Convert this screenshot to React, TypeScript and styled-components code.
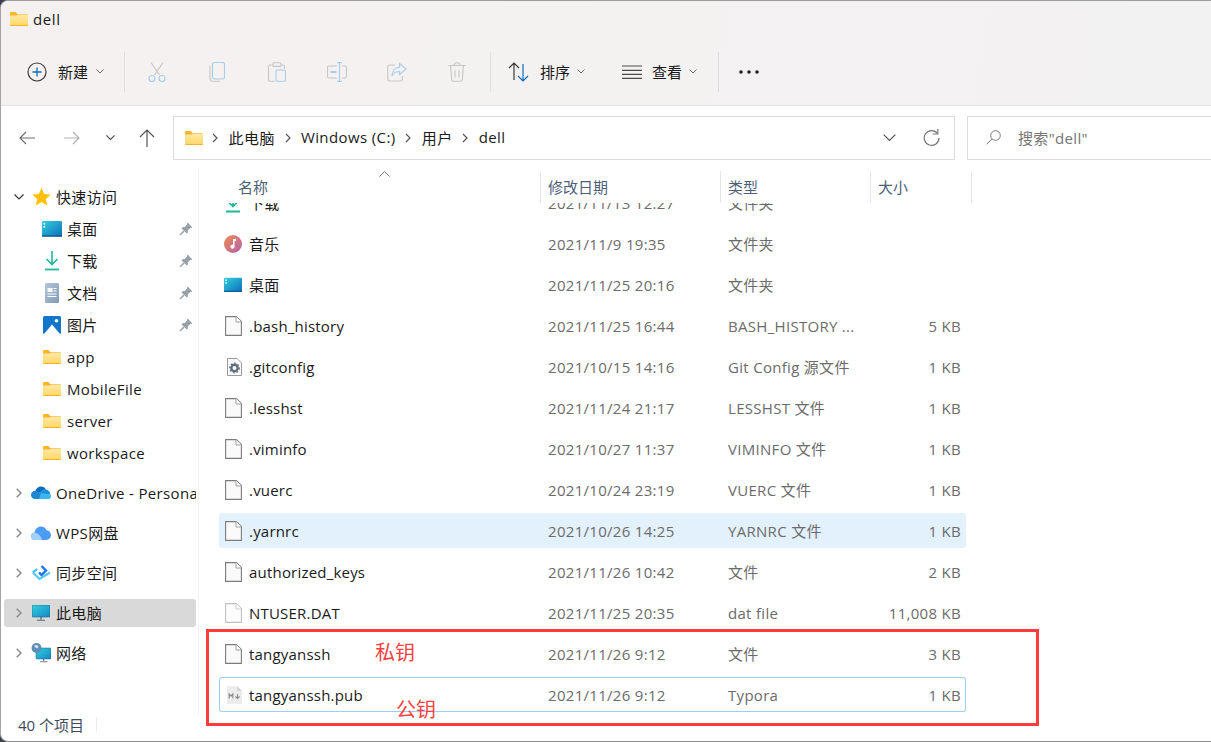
import React from 'react';
import styled, { createGlobalStyle } from 'styled-components';

const GlobalStyle = createGlobalStyle`
  html, body { margin: 0; padding: 0; background: #3a3f4a; }
  body { font-family: "Open Sans", "Noto Sans CJK SC", sans-serif; }
  * { box-sizing: border-box; }
`;

const UI_FONT = '"Open Sans", "Noto Sans CJK SC", sans-serif';

const Window = styled.div`
  position: relative;
  width: 1211px;
  height: 742px;
  display: flex;
  flex-direction: column;
  overflow: hidden;
  background: #fff;
  border-top: 1px solid #9c9c9c;
  border-left: 1px solid #a4a4a4;
  border-bottom: 1px solid #8e8e8e;
  border-radius: 8px 0 0 8px;
  font-family: ${UI_FONT};
  font-size: 15px;
  color: #1a1a1a;
`;

const Chrome = styled.div`
  background: linear-gradient(100deg, #f4f1f0 0%, #f4f1f1 40%, #f3f2f2 100%);
  border-bottom: 1px solid #e2e2e2;
`;

const TitleBar = styled.div`
  height: 45px;
  display: flex;
  align-items: center;
  gap: 5px;
  padding: 0 0 10px 9px;
  font-size: 15px;
  letter-spacing: 0.6px;
`;

const Toolbar = styled.div`
  height: 59px;
  display: flex;
  align-items: center;
  padding: 0 0 8px 26px;
`;

const TextButton = styled.div<{ $width: number; $pad?: number; $gap?: number }>`
  width: ${({ $width }) => $width}px;
  display: flex;
  align-items: center;
  gap: ${({ $gap }) => $gap ?? 10}px;
  padding-left: ${({ $pad }) => $pad ?? 0}px;
  font-size: 15px;
  svg { flex: 0 0 auto; }
`;

const IconButton = styled.div`
  width: 60px;
  display: flex;
  justify-content: center;
`;

const ToolDivider = styled.div<{ $offset?: number }>`
  width: 1px;
  height: 40px;
  margin: 0 2px 0 ${({ $offset }) => $offset ?? 0}px;
  background: #e0dfdf;
`;

const SmallCaret = styled.svg`
  width: 8px;
  height: 5px;
  margin-left: -3px;
  fill: none;
  stroke: #666;
  stroke-width: 1;
`;

const NavRow = styled.div`
  height: 64px;
  display: flex;
  align-items: flex-start;
  padding-top: 10px;
`;

const NavButtons = styled.div`
  width: 172px;
  height: 43px;
  display: flex;
  align-items: center;
`;

const NavButton = styled.div<{ $width: number }>`
  width: ${({ $width }) => $width}px;
  display: flex;
  justify-content: center;
`;

const AddressBox = styled.div`
  width: 782px;
  height: 44px;
  display: flex;
  align-items: center;
  gap: 7px;
  padding: 0 12px 0 10.5px;
  border: 1.5px solid #dcdcdc;
  background: #fff;
`;

const Crumb = styled.span`
  padding-bottom: 2px;
  font-size: 15px;
  letter-spacing: 0.4px;
  white-space: nowrap;
`;

const CrumbSep = styled.svg`
  width: 6px;
  height: 10px;
  margin: 0 3.3px 0 2.8px;
  fill: none;
  stroke: #555;
  stroke-width: 1.2;
`;

const AddressTools = styled.div`
  margin-left: auto;
  display: flex;
  align-items: center;
  gap: 27px;
  padding-right: 2px;
`;

const SearchBox = styled.div`
  flex: 1;
  height: 44px;
  margin-left: 12px;
  margin-right: -4px;
  display: flex;
  align-items: center;
  gap: 17px;
  padding: 0 0 2px 18px;
  border: 1.5px solid #dcdcdc;
  font-size: 15px;
  letter-spacing: 0.35px;
  color: #757575;
`;

const Body = styled.div`
  flex: 1;
  min-height: 0;
  display: flex;
`;

const Sidebar = styled.nav`
  width: 198px;
  flex: 0 0 auto;
  padding: 13px 2px 0 3px;
  border-right: 1px solid #f2f2f2;
  overflow: hidden;
`;

const TreeGroup = styled.div<{ $gap: number }>`
  display: flex;
  flex-direction: column;
  gap: ${({ $gap }) => $gap}px;
  margin-bottom: 12px;
`;

const TreeRow = styled.div<{ $selected?: boolean; $child?: boolean }>`
  height: 28px;
  display: flex;
  align-items: center;
  padding: 0 0 1px ${({ $child }) => ($child ? 38 : 9)}px;
  border-radius: 3px;
  background: ${({ $selected }) => ($selected ? '#d9d9d9' : 'transparent')};
  letter-spacing: 0.35px;
  white-space: nowrap;
  overflow: hidden;
`;

const TreeLabel = styled.span`
  flex: 0 0 auto;
`;

const Twisty = styled.span`
  width: 12px;
  height: 12px;
  flex: 0 0 auto;
  margin-right: 6px;
  display: flex;
  align-items: center;
  justify-content: center;
`;

const TreeIcon = styled.span`
  width: 20px;
  height: 20px;
  flex: 0 0 auto;
  margin-right: 5px;
  display: flex;
  align-items: center;
  justify-content: center;
`;

const Pin = styled.span`
  margin-left: auto;
  margin-right: 3px;
  display: flex;
`;

const FilePane = styled.main`
  flex: 1;
  min-width: 0;
  display: flex;
  flex-direction: column;
  padding-top: 1px;
`;

const HeaderRow = styled.div`
  position: relative;
  height: 32px;
  flex: 0 0 auto;
  display: grid;
  grid-template-columns: 342px 180px 150px 101px;
  background: #fff;
`;

const HeaderCell = styled.div<{ $first?: boolean }>`
  padding: 5px 0 0 ${({ $first }) => ($first ? 39 : 7)}px;
  border-right: 1px solid #e6e6e6;
  font-size: 15px;
  color: #4c5f78;
`;

const SortCaret = styled.svg`
  position: absolute;
  left: 180px;
  top: 0;
  width: 11px;
  height: 6px;
  fill: none;
  stroke: #777;
  stroke-width: 1;
`;

const ListViewport = styled.div`
  flex: 1;
  min-height: 0;
  overflow: hidden;
`;

const FileList = styled.div`
  margin: -18px 0 0 20px;
  width: 747px;
  display: flex;
  flex-direction: column;
  gap: 6px;
`;

const FileRow = styled.div<{ $state?: 'selected' | 'focused' }>`
  height: 35px;
  display: grid;
  grid-template-columns: 322px 180px 150px 95px;
  align-items: center;
  border-radius: 3px;
  background: ${({ $state }) => ($state === 'selected' ? '#e3f1fc' : 'transparent')};
  box-shadow: ${({ $state }) => ($state === 'focused' ? 'inset 0 0 0 1px #9fcdf3' : 'none')};
`;

const NameCell = styled.div`
  display: flex;
  align-items: center;
  gap: 7px;
  padding-left: 5px;
  white-space: nowrap;
  font-size: 15px;
  letter-spacing: 0.2px;
`;

const FileIconSlot = styled.span`
  width: 18px;
  height: 20px;
  display: flex;
  align-items: center;
  justify-content: center;
`;

const DetailCell = styled.div<{ $right?: boolean }>`
  padding: ${({ $right }) => ($right ? '0 5px 0 0' : '0 0 0 7px')};
  text-align: ${({ $right }) => ($right ? 'right' : 'left')};
  font-size: 15px;
  letter-spacing: 0.3px;
  color: #6b6b6b;
  white-space: nowrap;
  overflow: hidden;
`;

const StatusBar = styled.div`
  height: 25px;
  flex: 0 0 auto;
  display: flex;
  align-items: center;
  padding: 0 0 8px 17px;
  font-size: 15px;
  color: #3d4a5c;
`;

const StatusDivider = styled.div`
  width: 1px;
  height: 15px;
  margin-left: 12px;
  background: #ececec;
`;

const RedBox = styled.div`
  position: absolute;
  left: 205px;
  top: 628px;
  width: 833px;
  height: 97px;
  border: 3px solid #ff3b3b;
  pointer-events: none;
`;

const Annotation = styled.span<{ $x: number; $y: number }>`
  position: absolute;
  left: ${({ $x }) => $x}px;
  top: ${({ $y }) => $y}px;
  font-size: 20px;
  line-height: 26px;
  color: #f5413f;
  font-family: "Noto Sans CJK SC", sans-serif;
`;

const Gradients = () => (
  <svg width="0" height="0" style={{ position: 'absolute' }} aria-hidden="true">
    <defs>
      <linearGradient id="folderBody" x1="0" y1="0" x2="0" y2="1">
        <stop offset="0" stopColor="#ffe9a6" />
        <stop offset="1" stopColor="#ffd766" />
      </linearGradient>
      <linearGradient id="desktopFill" x1="0" y1="0" x2="1" y2="1">
        <stop offset="0" stopColor="#35cfe0" />
        <stop offset="1" stopColor="#0c6fb8" />
      </linearGradient>
      <linearGradient id="musicFill" x1="0" y1="0" x2="1" y2="1">
        <stop offset="0" stopColor="#f08a4b" />
        <stop offset="1" stopColor="#b263b0" />
      </linearGradient>
      <linearGradient id="docFill" x1="0" y1="0" x2="1" y2="1">
        <stop offset="0" stopColor="#b6c7da" />
        <stop offset="1" stopColor="#7f9ab8" />
      </linearGradient>
      <linearGradient id="pcFill" x1="0" y1="0" x2="1" y2="1">
        <stop offset="0" stopColor="#32d0de" />
        <stop offset="1" stopColor="#1488c4" />
      </linearGradient>
    </defs>
  </svg>
);

const FolderIcon = () => (
  <svg width="18" height="14" viewBox="0 0 18 14">
    <path d="M0 1.2C0 .5.5 0 1.2 0h4.2l2 2H17c.6 0 1 .4 1 1v2H0z" fill="#f7b52c" />
    <path d="M0 3.6h6.6L8 2.6H18V13c0 .6-.4 1-1 1H1c-.6 0-1-.4-1-1z" fill="url(#folderBody)" />
    <path d="M0 13h18v.2c0 .5-.4.8-.9.8H.9c-.5 0-.9-.3-.9-.8z" fill="#f4b42e" />
  </svg>
);

const DesktopIcon = () => (
  <svg width="20" height="16" viewBox="0 0 20 16">
    <rect width="20" height="15.5" rx="1.2" fill="url(#desktopFill)" />
    <rect x="1.5" y="2" width="1.6" height="1.6" fill="#fff" />
    <rect x="1.5" y="5" width="1.6" height="1.6" fill="#fff" />
    <rect y="14.4" width="20" height="1.2" fill="#0a4f8c" />
  </svg>
);

const DownloadIcon = () => (
  <svg width="16" height="20" viewBox="0 0 16 20" fill="none" stroke="#1fb89a" strokeWidth="1.6">
    <path d="M8 0v13M2.5 8 8 13.5 13.5 8" />
    <path d="M1 18.5h14" strokeWidth="1.8" />
  </svg>
);

const DocumentIcon = () => (
  <svg width="16" height="20" viewBox="0 0 16 20">
    <rect x="1" width="14" height="20" rx="1.5" fill="url(#docFill)" />
    <path d="M3.5 5h5v4h-5zM9.5 5h3v1h-3zM9.5 7.5h3v1h-3zM3.5 10.5h9v1h-9zM3.5 13h9v1h-9z" fill="#fff" />
  </svg>
);

const PicturesIcon = () => (
  <svg width="18" height="18" viewBox="0 0 18 18">
    <rect width="18" height="18" rx="1.5" fill="#1176c9" />
    <circle cx="13.5" cy="4.8" r="1.8" fill="#fff" />
    <path d="M1 18 9 8.5 17 18z" fill="#fff" />
  </svg>
);

const PinIcon = () => (
  <svg width="14" height="14" viewBox="0 0 14 14" fill="#98a0a8">
    <path d="M8.6.6 13.4 5.4 12.4 6 11.5 5.8 8.9 8.4 8.8 10.6 7.8 11.6 2.4 6.2 3.4 5.2 5.6 5.1 8.2 2.5 8 1.6z" />
    <path d="M4.3 8.6 5.4 9.7 1.2 13.6.4 12.8z" />
  </svg>
);

const StarIcon = () => (
  <svg width="19" height="18" viewBox="0 0 19 18">
    <path d="M9.5 0l2.7 6 6.5.7-4.9 4.3 1.4 6.4-5.7-3.3-5.7 3.3L5.2 11 .3 6.7 6.8 6z" fill="#ffc000" />
  </svg>
);

const OneDriveIcon = () => (
  <svg width="20" height="13" viewBox="0 0 20 13">
    <path d="M4 6.5C4.4 3 7 .5 10 .5c2.2 0 4 1.2 5 3-2.6 0-4.2 1-5.2 3L4 8z" fill="#0f6cbd" />
    <path d="M9 7c1-2.4 3-3.5 5.5-3.5 2.7 0 4.5 2 5 5L9 9z" fill="#1b8fdc" />
    <path d="M4.3 4.8C2 4.8 0 6.5 0 9c0 2.3 1.8 4 4 4h6V8L7 6z" fill="#1f86d6" />
    <path d="M8 13h9.5c1.5 0 2.5-1.2 2.5-2.6 0-.7-.2-1.3-.5-1.9L10 7z" fill="#3cb6f2" />
  </svg>
);

const WpsIcon = () => (
  <svg width="20" height="14" viewBox="0 0 20 14">
    <path d="M4 14C1.8 14 0 12.4 0 10.2 0 8 1.7 6.5 3.6 6.4 4 3 6.8.5 10 .5c2.5 0 4.7 1.5 5.6 3.7 2.5.2 4.4 2.4 4.4 4.9 0 2.7-2.1 4.9-4.7 4.9z" fill="#4b9cf5" />
    <path d="M3 14c-1.8-.5-3-2-3-3.8C0 8 1.7 6.5 3.6 6.4 7 7 10 10 11 14z" fill="#a5cffb" />
  </svg>
);

const SyncIcon = () => (
  <svg width="19" height="15" viewBox="0 0 19 15" fill="none">
    <path d="M9.5 1 14 5.5 9.5 10 7 7.5" stroke="#1877f2" strokeWidth="2.4" />
    <path d="M1 7.5 5 4" stroke="#33c3f0" strokeWidth="2.2" />
    <path d="M1 7.5 7.5 14 18 7.5" stroke="#55c8f5" strokeWidth="2.2" />
  </svg>
);

const ComputerIcon = () => (
  <svg width="18" height="16" viewBox="0 0 18 16">
    <rect width="18" height="12" rx=".8" fill="url(#pcFill)" stroke="#245f80" strokeWidth=".6" />
    <path d="M8.3 12h1.4v2.5H8.3zM5 14.8h8v1H5z" fill="#5a6b7a" />
  </svg>
);

const NetworkIcon = () => (
  <svg width="20" height="20" viewBox="0 0 20 20">
    <rect x="5" y="5" width="15" height="11" rx=".8" fill="url(#pcFill)" stroke="#245f80" strokeWidth=".5" />
    <path d="M12 16h1.4v2H12zM9 18.3h7.5v1H9z" fill="#6d7f8e" />
    <circle cx="5.5" cy="5" r="5" fill="#5e8db5" />
    <path d="M3 3c1.5-1.5 3.5-1 4.5.5 0 1.5-1.5 2-2.5 1.5z" fill="#cfe2f0" />
  </svg>
);

const PageIcon = ({ faint }: { faint?: boolean }) => (
  <svg width="18" height="20" viewBox="-1 0 18 20">
    <path
      d="M.6.6h10.8l5 5v13.8H.6z"
      fill={faint ? '#fdfdfd' : '#fafafa'}
      stroke={faint ? '#c2c2c2' : '#7c7c7c'}
      strokeWidth="1.1"
    />
    <path d="M11 .6V6h5.4" fill="#fff" stroke={faint ? '#cfcfcf' : '#a0a0a0'} strokeWidth="1" />
  </svg>
);

const ConfigFileIcon = () => (
  <svg width="17" height="18" viewBox="-2 0 17 18">
    <path d="M.5.5H10L14.5 5v12.500H.5z" fill="#fbfbfb" stroke="#9a9a9a" />
    <circle cx="7.5" cy="10" r="3.2" fill="none" stroke="#5f6f7c" strokeWidth="2.4" />
    <circle cx="7.5" cy="10" r="4.8" fill="none" stroke="#5f6f7c" strokeWidth="1.2" strokeDasharray="1.8 1.8" />
  </svg>
);

const TyporaIcon = () => (
  <svg width="17" height="18" viewBox="-2 0 17 18">
    <path d="M1 0h9l5 5v12c0 .6-.4 1-1 1H1c-.6 0-1-.4-1-1V1c0-.6.4-1 1-1z" fill="#ececec" />
    <path d="M10 0l5 5h-5z" fill="#d4d4d4" />
    <path d="M2.2 12.5V8L4 10.2 5.8 8v4.5M10.5 8v4M8.5 10.5l2 2 2-2" fill="none" stroke="#8a8a8a" strokeWidth="1.1" />
  </svg>
);

const MusicIcon = () => (
  <svg width="20" height="20" viewBox="0 0 20 20">
    <circle cx="10" cy="10" r="10" fill="url(#musicFill)" />
    <path d="M10 4.5h3.5v2.2h-1.800V13c0 1.300-1.100 2.200-2.300 2.200S7.200 14.300 7.200 13s1.200-2.200 2.800-2z" fill="#fff" />
  </svg>
);

const NewIcon = () => (
  <svg width="20" height="20" viewBox="0 0 20 20" fill="none">
    <circle cx="10" cy="10" r="9" stroke="#3a3a3a" strokeWidth="1.2" />
    <path d="M10 5.5v9M5.5 10h9" stroke="#0f6cbd" strokeWidth="1.3" />
  </svg>
);

const CutIcon = () => (
  <svg width="18" height="20" viewBox="0 0 18 20" fill="none" strokeWidth="1.1">
    <path d="M3 .5 11.5 13M15 .5 6.5 13" stroke="#c4c4c4" />
    <circle cx="4" cy="16.5" r="3" stroke="#a5cdee" />
    <circle cx="14" cy="16.5" r="3" stroke="#a5cdee" />
  </svg>
);

const CopyIcon = () => (
  <svg width="16" height="20" viewBox="0 0 16 20" fill="none" strokeWidth="1.1">
    <path d="M1 3.5v13c0 1.600 1 2.800 2.800 2.800H11" stroke="#c6c6c6" />
    <rect x="3.5" y=".5" width="12" height="16.5" rx="1.8" stroke="#a5cdee" />
  </svg>
);

const PasteIcon = () => (
  <svg width="18" height="20" viewBox="0 0 18 20" fill="none" strokeWidth="1.1">
    <path d="M5 3H2C1 3 .5 3.6.5 4.5v13c0 1 .5 1.800 1.500 1.800h5M13 3h2c1 0 1.500.6 1.500 1.500V7" stroke="#c6c6c6" />
    <rect x="5" y=".8" width="8" height="3.6" rx="1" stroke="#c6c6c6" />
    <rect x="8" y="8" width="9.5" height="11.3" rx="1.6" stroke="#a5cdee" />
  </svg>
);

const RenameIcon = () => (
  <svg width="20" height="20" viewBox="0 0 20 20" fill="none" strokeWidth="1.1">
    <path d="M10 4H2C1 4 .5 4.6.5 5.5v9c0 1 .5 1.500 1.500 1.500h8M15 4h3c1 0 1.500.6 1.500 1.500v9c0 1-.5 1.500-1.500 1.500h-3" stroke="#c6c6c6" />
    <path d="M3.5 10h6" stroke="#a5cdee" strokeWidth="1.8" />
    <path d="M12.5 1v18M10 .6h5M10 19.4h5" stroke="#a5cdee" />
  </svg>
);

const ShareIcon = () => (
  <svg width="20" height="20" viewBox="0 0 20 20" fill="none" strokeWidth="1.1">
    <path d="M8 3H2.500C1.500 3 .8 3.800.8 4.800v12.400c0 1 .7 1.800 1.700 1.800h11c1 0 1.800-.8 1.800-1.800V14" stroke="#c6c6c6" />
    <path d="M12.5 1.500 19 7l-6.500 5.500V9.500C9 9.500 6.500 11 5 14c0-5 3-8.500 7.500-8.800z" stroke="#a5cdee" />
  </svg>
);

const TrashIcon = () => (
  <svg width="18" height="20" viewBox="0 0 18 20" fill="none" stroke="#c6c6c6" strokeWidth="1.1">
    <path d="M.5 3.5h17M6 3.500C6 1.800 7.200.7 9 .7s3 1.100 3 2.800M2.500 3.500l1.200 14.300c.1.900.7 1.500 1.600 1.500h7.400c.9 0 1.500-.6 1.600-1.500l1.200-14.300M7 8v7.500M11 8v7.500" />
  </svg>
);

const SortIcon = () => (
  <svg width="22" height="20" viewBox="0 0 22 20" fill="none" strokeWidth="1.2">
    <path d="M6 18V1M1 6l5-5 5 5" stroke="#3a3a3a" />
    <path d="M15 2v17M10 14l5 5 5-5" stroke="#0f6cbd" />
  </svg>
);

const ViewIcon = () => (
  <svg width="20" height="14" viewBox="0 0 20 14" stroke="#4a4a4a" strokeWidth="1.2">
    <path d="M0 1h20M0 5.3h20M0 9.3h20M0 13.3h20" />
  </svg>
);

const MoreDots = () => (
  <svg width="20" height="4" viewBox="0 0 20 4" fill="#222">
    <circle cx="2" cy="2" r="1.8" />
    <circle cx="10" cy="2" r="1.8" />
    <circle cx="18" cy="2" r="1.8" />
  </svg>
);

const Caret = () => (
  <SmallCaret viewBox="0 0 8 5"><path d="M.5.5 4 4 7.5.5" /></SmallCaret>
);

const ArrowLeft = ({ color }: { color: string }) => (
  <svg width="16" height="14" viewBox="0 0 16 14" fill="none" stroke={color} strokeWidth="1.2">
    <path d="M16 7H1M7 1 1 7l6 6" />
  </svg>
);

const ArrowRight = ({ color }: { color: string }) => (
  <svg width="16" height="14" viewBox="0 0 16 14" fill="none" stroke={color} strokeWidth="1.2">
    <path d="M0 7h15M9 1l6 6-6 6" />
  </svg>
);

const ArrowUp = () => (
  <svg width="16" height="18" viewBox="0 0 16 18" fill="none" stroke="#555" strokeWidth="1.2">
    <path d="M8 18V1M1 8l7-7 7 7" />
  </svg>
);

const ChevronDown = ({ size = 8, color = '#444', weight = 1.2 }: { size?: number; color?: string; weight?: number }) => (
  <svg width={size} height={size * 0.6} viewBox="0 0 10 6" fill="none" stroke={color} strokeWidth={(weight * 10) / size}>
    <path d="M.5.5 5 5 9.5.5" />
  </svg>
);

const ChevronRight = () => (
  <svg width="6" height="10" viewBox="0 0 6 10" fill="none" stroke="#888" strokeWidth="1.4">
    <path d="M.7.7 5 5 .7 9.3" />
  </svg>
);

const Refresh = () => (
  <svg width="17" height="18" viewBox="0 0 17 18" fill="none" stroke="#777" strokeWidth="1.2">
    <path d="M14.5 4.5A7.4 7.4 0 1 0 16 9" />
    <path d="M14.8 0v5h-5" />
  </svg>
);

const SearchIcon = () => (
  <svg width="15" height="15" viewBox="0 0 15 15" fill="none" stroke="#777" strokeWidth="1">
    <circle cx="9.5" cy="5.5" r="4.8" />
    <path d="M6 9 .7 14.3" />
  </svg>
);

const CrumbArrow = () => (
  <CrumbSep viewBox="0 0 6 10"><path d="M1 1l4 4-4 4" /></CrumbSep>
);

interface FileEntry {
  name: string;
  date: string;
  type: string;
  size?: string;
  icon: React.ReactNode;
  state?: 'selected' | 'focused';
}

const FILES: FileEntry[] = [
  { name: '下载', date: '2021/11/13 12:27', type: '文件夹', icon: <DownloadIcon /> },
  { name: '音乐', date: '2021/11/9 19:35', type: '文件夹', icon: <MusicIcon /> },
  { name: '桌面', date: '2021/11/25 20:16', type: '文件夹', icon: <DesktopIcon /> },
  { name: '.bash_history', date: '2021/11/25 16:44', type: 'BASH_HISTORY ...', size: '5 KB', icon: <PageIcon /> },
  { name: '.gitconfig', date: '2021/10/15 14:16', type: 'Git Config 源文件', size: '1 KB', icon: <ConfigFileIcon /> },
  { name: '.lesshst', date: '2021/11/24 21:17', type: 'LESSHST 文件', size: '1 KB', icon: <PageIcon /> },
  { name: '.viminfo', date: '2021/10/27 11:37', type: 'VIMINFO 文件', size: '1 KB', icon: <PageIcon /> },
  { name: '.vuerc', date: '2021/10/24 23:19', type: 'VUERC 文件', size: '1 KB', icon: <PageIcon /> },
  { name: '.yarnrc', date: '2021/10/26 14:25', type: 'YARNRC 文件', size: '1 KB', icon: <PageIcon />, state: 'selected' },
  { name: 'authorized_keys', date: '2021/11/26 10:42', type: '文件', size: '2 KB', icon: <PageIcon /> },
  { name: 'NTUSER.DAT', date: '2021/11/25 20:35', type: 'dat file', size: '11,008 KB', icon: <PageIcon faint /> },
  { name: 'tangyanssh', date: '2021/11/26 9:12', type: '文件', size: '3 KB', icon: <PageIcon /> },
  { name: 'tangyanssh.pub', date: '2021/11/26 9:12', type: 'Typora', size: '1 KB', icon: <TyporaIcon />, state: 'focused' },
];

const QUICK_ACCESS: { label: string; icon: React.ReactNode; pinned?: boolean }[] = [
  { label: '桌面', icon: <DesktopIcon />, pinned: true },
  { label: '下载', icon: <DownloadIcon />, pinned: true },
  { label: '文档', icon: <DocumentIcon />, pinned: true },
  { label: '图片', icon: <PicturesIcon />, pinned: true },
  { label: 'app', icon: <FolderIcon /> },
  { label: 'MobileFile', icon: <FolderIcon /> },
  { label: 'server', icon: <FolderIcon /> },
  { label: 'workspace', icon: <FolderIcon /> },
];

const ROOTS: { label: string; icon: React.ReactNode; selected?: boolean }[] = [
  { label: 'OneDrive - Personal', icon: <OneDriveIcon /> },
  { label: 'WPS网盘', icon: <WpsIcon /> },
  { label: '同步空间', icon: <SyncIcon /> },
  { label: '此电脑', icon: <ComputerIcon />, selected: true },
  { label: '网络', icon: <NetworkIcon /> },
];

export default function App() {
  return (
    <Window>
      <GlobalStyle />
      <Gradients />
      <Chrome>
        <TitleBar>
          <FolderIcon />
          <span>dell</span>
        </TitleBar>
        <Toolbar>
          <TextButton $width={97} $gap={11}>
            <NewIcon />
            <span>新建</span>
            <Caret />
          </TextButton>
          <ToolDivider />
          <IconButton><CutIcon /></IconButton>
          <IconButton><CopyIcon /></IconButton>
          <IconButton><PasteIcon /></IconButton>
          <IconButton><RenameIcon /></IconButton>
          <IconButton><ShareIcon /></IconButton>
          <IconButton><TrashIcon /></IconButton>
          <ToolDivider $offset={3} />
          <TextButton $width={129} $pad={15}>
            <SortIcon />
            <span>排序</span>
            <Caret />
          </TextButton>
          <TextButton $width={96}>
            <ViewIcon />
            <span>查看</span>
            <Caret />
          </TextButton>
          <ToolDivider />
          <TextButton $width={60} $pad={18}>
            <MoreDots />
          </TextButton>
        </Toolbar>
      </Chrome>
      <NavRow>
        <NavButtons>
          <NavButton $width={52}><ArrowLeft color="#6f6f6f" /></NavButton>
          <NavButton $width={38}><ArrowRight color="#b0b0b0" /></NavButton>
          <NavButton $width={38}><ChevronDown size={9} color="#555" /></NavButton>
          <NavButton $width={36}><ArrowUp /></NavButton>
        </NavButtons>
        <AddressBox>
          <FolderIcon />
          <CrumbArrow />
          <Crumb>此电脑</Crumb>
          <CrumbArrow />
          <Crumb>Windows (C:)</Crumb>
          <CrumbArrow />
          <Crumb>用户</Crumb>
          <CrumbArrow />
          <Crumb>dell</Crumb>
          <AddressTools>
            <ChevronDown size={13} color="#555" />
            <Refresh />
          </AddressTools>
        </AddressBox>
        <SearchBox>
          <SearchIcon />
          <span>搜索"dell"</span>
        </SearchBox>
      </NavRow>
      <Body>
        <Sidebar>
          <TreeGroup $gap={4}>
            <TreeRow>
              <Twisty><ChevronDown size={10} color="#333" /></Twisty>
              <TreeIcon><StarIcon /></TreeIcon>
              <TreeLabel>快速访问</TreeLabel>
            </TreeRow>
            {QUICK_ACCESS.map(item => (
              <TreeRow key={item.label} $child>
                <TreeIcon>{item.icon}</TreeIcon>
                <TreeLabel>{item.label}</TreeLabel>
                {item.pinned && <Pin><PinIcon /></Pin>}
              </TreeRow>
            ))}
          </TreeGroup>
          <TreeGroup $gap={12}>
            {ROOTS.map(item => (
              <TreeRow key={item.label} $selected={item.selected}>
                <Twisty><ChevronRight /></Twisty>
                <TreeIcon>{item.icon}</TreeIcon>
                <TreeLabel>{item.label}</TreeLabel>
              </TreeRow>
            ))}
          </TreeGroup>
        </Sidebar>
        <FilePane>
          <HeaderRow>
            <HeaderCell $first>名称</HeaderCell>
            <HeaderCell>修改日期</HeaderCell>
            <HeaderCell>类型</HeaderCell>
            <HeaderCell>大小</HeaderCell>
            <SortCaret viewBox="0 0 11 6"><path d="M.5 5.5 5.5.5l5 5" /></SortCaret>
          </HeaderRow>
          <ListViewport>
            <FileList>
              {FILES.map(file => (
                <FileRow key={file.name} $state={file.state}>
                  <NameCell>
                    <FileIconSlot>{file.icon}</FileIconSlot>
                    <span>{file.name}</span>
                  </NameCell>
                  <DetailCell>{file.date}</DetailCell>
                  <DetailCell>{file.type}</DetailCell>
                  <DetailCell $right>{file.size}</DetailCell>
                </FileRow>
              ))}
            </FileList>
          </ListViewport>
        </FilePane>
      </Body>
      <StatusBar>
        <span>40 个项目</span>
        <StatusDivider />
      </StatusBar>
      <RedBox />
      <Annotation $x={374} $y={638}>私钥</Annotation>
      <Annotation $x={395} $y={695}>公钥</Annotation>
    </Window>
  );
}
